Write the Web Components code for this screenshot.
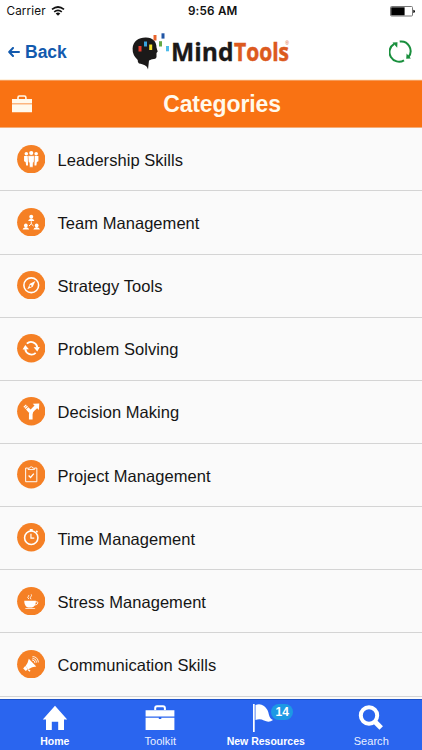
<!DOCTYPE html>
<html lang="en"><head><meta charset="utf-8"><title>Categories</title>
<style>
html,body{margin:0;height:100%;overflow:hidden;background:#fff}
body{font-family:"Liberation Sans",Arial,sans-serif;color:#151515}
</style></head><body>
<mt-app></mt-app>
<script>
const define = (name, css, html) => customElements.define(name, class extends HTMLElement {
  constructor(){
    super();
    const body = typeof html === 'function' ? html(this) : html;
    this.attachShadow({mode:'open'}).innerHTML = `<style>*{box-sizing:border-box}svg{display:block;flex:none}${css}</style>${body}`;
  }
});

const icons = {
leaders:`<g fill="#fff"><circle cx="9.5" cy="8.8" r="1.8"/><circle cx="19.5" cy="8.8" r="1.8"/><path d="M7.2 11.200h4v9.600H9.300l-.5-3.500-1.600-.8zM21.800 11.200h-4v9.600H19.700l.5-3.500 1.600-.8z"/><circle cx="14.5" cy="8.2" r="2.100"/><path d="M11.200 10.900h6.600l-.4 6.300-.9.700-.3 4.700h-3.400l-.3-4.700-.9-.7z" stroke="#f58025" stroke-width=".5"/></g>`,
team:`<g fill="#fff"><circle cx="14.500" cy="8.900" r="2"/><path d="M11.300 13.300q.2-1.900 3.200-2.600 3 .7 3.200 2.600z"/><circle cx="9" cy="17.700" r="1.900"/><path d="M5.700 22q.2-1.900 3.300-2.600 3.100.7 3.300 2.600z"/><circle cx="20" cy="17.700" r="1.900"/><path d="M16.700 22q.2-1.900 3.300-2.600 3.100.7 3.300 2.600z"/></g><path d="M14.500 13.500v2.700L12.200 18.300M14.500 16.200l2.300 2.100" fill="none" stroke="#fff" stroke-width="1"/>`,
compass:`<circle cx="14.500" cy="14.500" r="7.500" fill="none" stroke="#fff" stroke-width="1.600"/><path d="M18.700 10.300L16 16 10.500 18.500 13.100 13z" fill="#fff"/><circle cx="13.800" cy="15.200" r="1" fill="#f58025"/>`,
cycle:`<g fill="none" stroke="#fff" stroke-width="1.900"><path d="M10 9.800a6.300 6.300 0 0 1 10.600 3.700M19 19.200a6.300 6.300 0 0 1-10.600-3.700"/></g><path d="M5.700 15.700l2.700-4.500 3.700 4.200zM23.300 13.300l-2.700 4.600-3.700-4.300z" fill="#fff"/>`,
fork:`<path d="M14 22.800v-5q0-3.300 2.800-5.500l3.200-3" fill="none" stroke="#fff" stroke-width="3.700"/><path d="M16 6.900l6.700-.3-.4 6.600z" fill="#fff"/><path d="M13.600 15L7.800 8.800" fill="none" stroke="#fff" stroke-width="3.400" stroke-dasharray="4.700 .7 1.300 .6"/>`,
clipboard:`<g fill="none" stroke="#fff"><path d="M11 8.200H8.800v13.900h11.400V8.200H18" stroke-width="1"/><path d="M11.200 9.700V8.300h1.700q.1-1.400 1.600-1.400t1.600 1.400h1.700v1.400z" stroke-width=".9"/><path d="M11.800 15.800l2 2 3.300-4" stroke-width="1.300"/></g>`,
clock:`<circle cx="14.500" cy="15" r="6.800" fill="none" stroke="#fff" stroke-width="1.600"/><path d="M13 6h3v2.300h-3zM19 8.700l1.200-1.200 1.200 1.300-1.100 1.100z" fill="#fff"/><path d="M14.200 11v4.300h3.400" fill="none" stroke="#fff" stroke-width="1.200"/>`,
coffee:`<path d="M7.400 14h11.800c0 4.500-2.200 6.800-4.200 6.800h-3.400C9.200 20.800 7.400 18 7.400 14zM8 21.600h10.800l-1 .9H9z" fill="#fff"/><path d="M18.500 15.200q3-.8 2.800 1-.3 2-3.700 2.300M12.200 12.300q-2.200-1.600-.6-2.800.7-.8-.1-1.400M14.300 12.500q-1.700-1.700 0-3 .9-.8.2-2" fill="none" stroke="#fff" stroke-width=".9"/>`,
megaphone:`<path d="M12 8.800l7.600 8q-4.300.1-8 2.700l-2.900-3.200q2.600-3.400 3.300-7.500zM8.300 16.200l2.900 3.200-2.200 2-2.700-2.700zM12 19.500l1.800 1.700-1 .9-2-1.700z" fill="#fff"/><path d="M15.200 10q3 .4 3.200 3.300M15.600 8.300q4.200.3 4.500 4.600M15.800 6.600q5.500.4 6 6" fill="none" stroke="#fff" stroke-width=".9"/>`
};

define('mt-status',`:host{display:flex;height:22px;align-items:center;padding:0 7px 0 6.5px;font:500 11.7px Inter,sans-serif;color:#111}
.l,.r{flex:1;display:flex;align-items:center;gap:5px}.l{font-weight:400;letter-spacing:.12px}.r{justify-content:flex-end}b{font-weight:600;letter-spacing:.2px;padding-left:4px}`,
`<div class="l"><span>Carrier</span><svg width="14" height="10" viewBox="0 0 14 10"><g fill="none" stroke="#111" stroke-width="1.7"><path d="M1 3.400q6-4.800 12 0M3.200 5.800q3.800-3 7.600 0"/></g><path d="M4.700 7.400q2.300-1.600 4.600 0L7 9.800z" fill="#111"/></svg></div><b>9:56 AM</b>
<div class="r"><svg width="25" height="11" viewBox="0 0 25 11"><rect x=".5" y=".5" width="22" height="9.500" rx="1" fill="#fff" stroke="#777"/><path d="M1.200 1.300h13.400v8H1.200z"/><path d="M23.300 3.700q1.700 0 1.700 1.600t-1.700 1.600z"/></svg></div>`);

define('mt-logo',`:host{display:block}svg{overflow:visible}`,
`<svg width="164" height="42" viewBox="130 30 164 42"><path d="M148 69.500C147 65 143.500 64.500 139 63.500Q137.600 63 137.700 60Q132.300 55 132.600 48.500C133 41 139 37.300 146 37.500C153 37.700 156.500 41.500 156.500 47.500L157.700 51.500 156.500 53 156.500 57Q156 59.300 152 59.200L149 60.500Z" fill="#1b1919"/>
<g><path d="M138.500 46h3v5.500h-3z" fill="#e93b2c"/><path d="M144 41.500h3v5h-3z" fill="#38a3dc"/><path d="M149.200 44.500h3v5.500h-3z" fill="#f5df27"/><path d="M153.500 35h3v5.500h-3z" fill="#e8642c"/><path d="M161.500 33.300h3v5.300h-3z" fill="#2155a5"/><path d="M159 41.200h3v5.300h-3z" fill="#65a744"/><path d="M166 46h3v5.300h-3z" fill="#4dbbea"/></g>
<g font-family="Open Sans" font-weight="700" font-size="24.500"><text x="171" y="61.300" textLength="62.500" lengthAdjust="spacingAndGlyphs" fill="#1b1919" stroke="#1b1919" stroke-width=".3">Mind</text><text x="234" y="61.300" textLength="55" lengthAdjust="spacingAndGlyphs" fill="#dc5a1e" stroke="#dc5a1e" stroke-width=".5">Tools</text></g>
<text x="285.200" y="44.500" font-family="Liberation Sans" font-size="5" fill="#dc5a1e">®</text></svg>`);

define('mt-navbar',`:host{display:grid;grid-template-columns:130px 164px 1fr;height:58px;align-items:center;border-bottom:1px solid #fff0dc}
.back{display:flex;align-items:center;gap:5px;padding:3px 0 0 8px;color:#125aae;font-weight:700;font-size:17.500px}.back svg{margin-top:-1px}.refresh{justify-self:end;margin:0 9px 0 0}`,
`<div class="back"><svg width="12" height="10" viewBox="0 0 12 10"><path d="M5 1L1.200 5 5 9M1.500 5H11" fill="none" stroke="#125aae" stroke-width="2" stroke-linecap="round" stroke-linejoin="round"/></svg><span>Back</span></div><mt-logo></mt-logo>
<svg class="refresh" width="24" height="24" viewBox="0 0 24 24"><g fill="none" stroke="#198f3d" stroke-width="2"><path d="M15 21.300A9.500 9.500 0 0 1 5.200 4.800M10.700 2.600A9.500 9.500 0 0 1 19.400 18"/></g><path d="M3.500 3.500l5-.2-.3 5.500zM17.600 14.400l-.4 5.300 4.700-.2z" fill="#198f3d"/></svg>`);

define('mt-title',`:host{display:grid;grid-template-columns:60px 1fr 38px;align-items:center;height:48.300px;background:#f97213;border-top:1px solid #f69a58;border-bottom:1px solid #f3ad79;color:#fff9ec;font-weight:700;font-size:23px;text-align:center}svg{margin-left:11px}span{letter-spacing:-.12px;padding-top:1px}`,
`<svg width="22" height="18" viewBox="0 0 22 18"><path d="M7 4V2.400Q7 1 8.400 1h5Q14.900 1 14.900 2.400V4" fill="none" stroke="#fff9ec" stroke-width="1.600"/><path d="M1 4h20v4.500H1zM1 9.300h20V17.300H1z" fill="#fff9ec"/></svg><span><slot></slot></span>`);

define('mt-row',`:host{display:flex;align-items:center;gap:12.300px;height:63.150px;padding:0 0 1px 16.700px;border-bottom:1px solid #d4d4d4;background:#fafafa;font-size:16.500px;letter-spacing:.05px}
span{padding-top:3px}`,
el=>`<svg width="28.500" height="28.500" viewBox="0 0 29 29"><circle cx="14.500" cy="14.500" r="14.400" fill="#f58025"/>${icons[el.getAttribute('icon')]}</svg><span><slot></slot></span>`);

const tabs = {
home:`<svg width="26" height="26" viewBox="0 0 26 26"><path d="M13 .8L25.200 14.500H22V25h-5.800v-8.300H9.800V25H4V14.500H.8z" fill="#fff"/></svg>`,
toolkit:`<svg width="30" height="26" viewBox="0 0 30 26"><path d="M10.200 5V3.200Q10.200 1.300 12 1.300h6Q19.900 1.300 19.900 3.200V5" fill="none" stroke="#fff" stroke-width="2"/><path d="M.6 5.300h28.800v6.200H.6zM.6 12.800h13.200v1.300h2.500v-1.300h13.100V25H.6z" fill="#fff"/></svg>`,
flag:`<svg width="22" height="30" viewBox="0 0 22 30"><path d="M1 1h1.700v28H1zM3.500 2Q8 0 12 3t5 9q1 4 4 5-4 3-9 .5-4-2-8.500-.5z" fill="#fff"/></svg>`,
search:`<svg width="26" height="26" viewBox="0 0 26 26"><circle cx="11" cy="10.500" r="8.200" fill="none" stroke="#fff" stroke-width="4"/><path d="M16.500 16.300L23.200 23" stroke="#fff" stroke-width="5"/></svg>`};
define('mt-tab',`:host{display:flex;flex-direction:column;align-items:center;color:#e9efff;font-size:11px;letter-spacing:.05px;padding-top:2px}
:host([strong]){font-weight:700;color:#fff;font-size:10.500px;letter-spacing:0}.ic{height:33px;display:flex;align-items:center;position:relative}.home,.toolkit,.search{padding-bottom:1px}.flag{padding-bottom:1px;margin-right:5px}
.badge{position:absolute;left:19px;top:2px;width:22px;height:16px;border-radius:8px;background:#1d99e4;color:#fff;font:700 12px/16px "Liberation Sans",sans-serif;text-align:center}.lb{line-height:13px}`,
el=>{const k=el.getAttribute('icon'),b=el.getAttribute('badge');return `<div class="ic ${k}">${tabs[k]}${b?`<span class="badge">${b}</span>`:''}</div><span class="lb"><slot></slot></span>`});

define('mt-tabbar',`:host{display:grid;grid-template-columns:repeat(4,105.500px);height:51px;padding-left:2px;background:#2a65ef;border-top:1px solid #1c50c8}`,
`<mt-tab icon="home" strong>Home</mt-tab><mt-tab icon="toolkit">Toolkit</mt-tab><mt-tab icon="flag" badge="14" strong>New Resources</mt-tab><mt-tab icon="search">Search</mt-tab>`);

define('mt-app',`:host{display:flex;flex-direction:column;width:422px;height:750px;overflow:hidden}main{flex:1;min-height:0;overflow:hidden;background:#fafafa}mt-status,mt-navbar,mt-title,mt-tabbar{flex:none}`,
`<mt-status></mt-status><mt-navbar></mt-navbar><mt-title>Categories</mt-title><main>${[['leaders','Leadership Skills'],['team','Team Management'],['compass','Strategy Tools'],['cycle','Problem Solving'],['fork','Decision Making'],['clipboard','Project Management'],['clock','Time Management'],['coffee','Stress Management'],['megaphone','Communication Skills']].map(([i,t])=>`<mt-row icon="${i}">${t}</mt-row>`).join('')}</main><mt-tabbar></mt-tabbar>`);
</script></body></html>
